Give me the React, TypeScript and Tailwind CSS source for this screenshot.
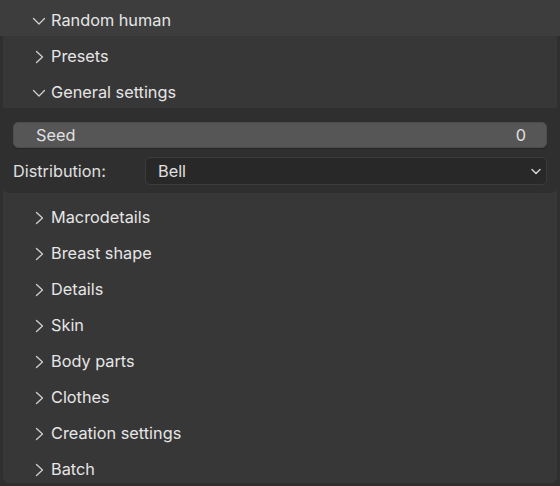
import React from "react";

function Chevron({ open }: { open: boolean }) {
  return (
    <svg
      width="14"
      height="14"
      viewBox="0 0 14 14"
      fill="none"
      stroke="#cfcfcf"
      strokeWidth="1.3"
      strokeLinecap="round"
      strokeLinejoin="round"
      className="shrink-0"
    >
      {open ? <path d="M1.5 4.5 L7 10 L12.5 4.5" /> : <path d="M4.5 1.5 L10.5 7 L4.5 12.5" />}
    </svg>
  );
}

function PanelHeader({ label, open = false, nested = true }: { label: string; open?: boolean; nested?: boolean }) {
  return (
    <div
      className={`flex h-[36px] items-center gap-[5px] pt-[5px] text-[16.3px] text-[#e6e6e6] ${
        nested ? "pl-[29px]" : "pl-[32px]"
      }`}
    >
      <Chevron open={open} />
      <span>{label}</span>
    </div>
  );
}

const subPanels = [
  "Macrodetails",
  "Breast shape",
  "Details",
  "Skin",
  "Body parts",
  "Clothes",
  "Creation settings",
  "Batch",
];

export default function App() {
  return (
    <div
      className="h-[486px] w-[560px] overflow-hidden bg-[#2f2f2f]"
      style={{ fontFamily: "Inter, 'Noto Sans', sans-serif" }}
    >
      <div className="bg-[#3d3d3d]">
        <PanelHeader label="Random human" open nested={false} />
      </div>

      <div className="px-[3px]">
        <div className="h-[447px] overflow-hidden rounded-b-[6px] bg-[#373737]">
          <PanelHeader label="Presets" />
          <PanelHeader label="General settings" open />

          {/* General settings body */}
          <div className="flex flex-col gap-[9px] rounded-b-[6px] bg-[#2f2f2f] px-[10px] pb-[8px] pt-[14px] text-[16.3px] text-[#e0e0e0]">
            <div className="flex h-[26px] items-center justify-between rounded-[5px] border border-[#4c4c4c] bg-[#565656] pl-[22px] pr-[20px] shadow-[0_1px_0_#262626]">
              <span>Seed</span>
              <span>0</span>
            </div>
            <div className="flex h-[28px] items-center">
              <span className="w-[132px] shrink-0">Distribution:</span>
              <div className="flex h-full flex-1 items-center justify-between rounded-[5px] border border-[#3c3c3c] bg-[#282828] pl-[12px] pr-[4px]">
                <span>Bell</span>
                <svg width="12" height="12" viewBox="0 0 12 12" fill="none" stroke="#d8d8d8" strokeWidth="1.4" strokeLinecap="round" strokeLinejoin="round">
                  <path d="M2 4.5 L6 8.5 L10 4.5" />
                </svg>
              </div>
            </div>
          </div>

          <div className="pt-[4px]">
            {subPanels.map((name) => (
              <PanelHeader key={name} label={name} />
            ))}
          </div>
        </div>
      </div>
    </div>
  );
}
